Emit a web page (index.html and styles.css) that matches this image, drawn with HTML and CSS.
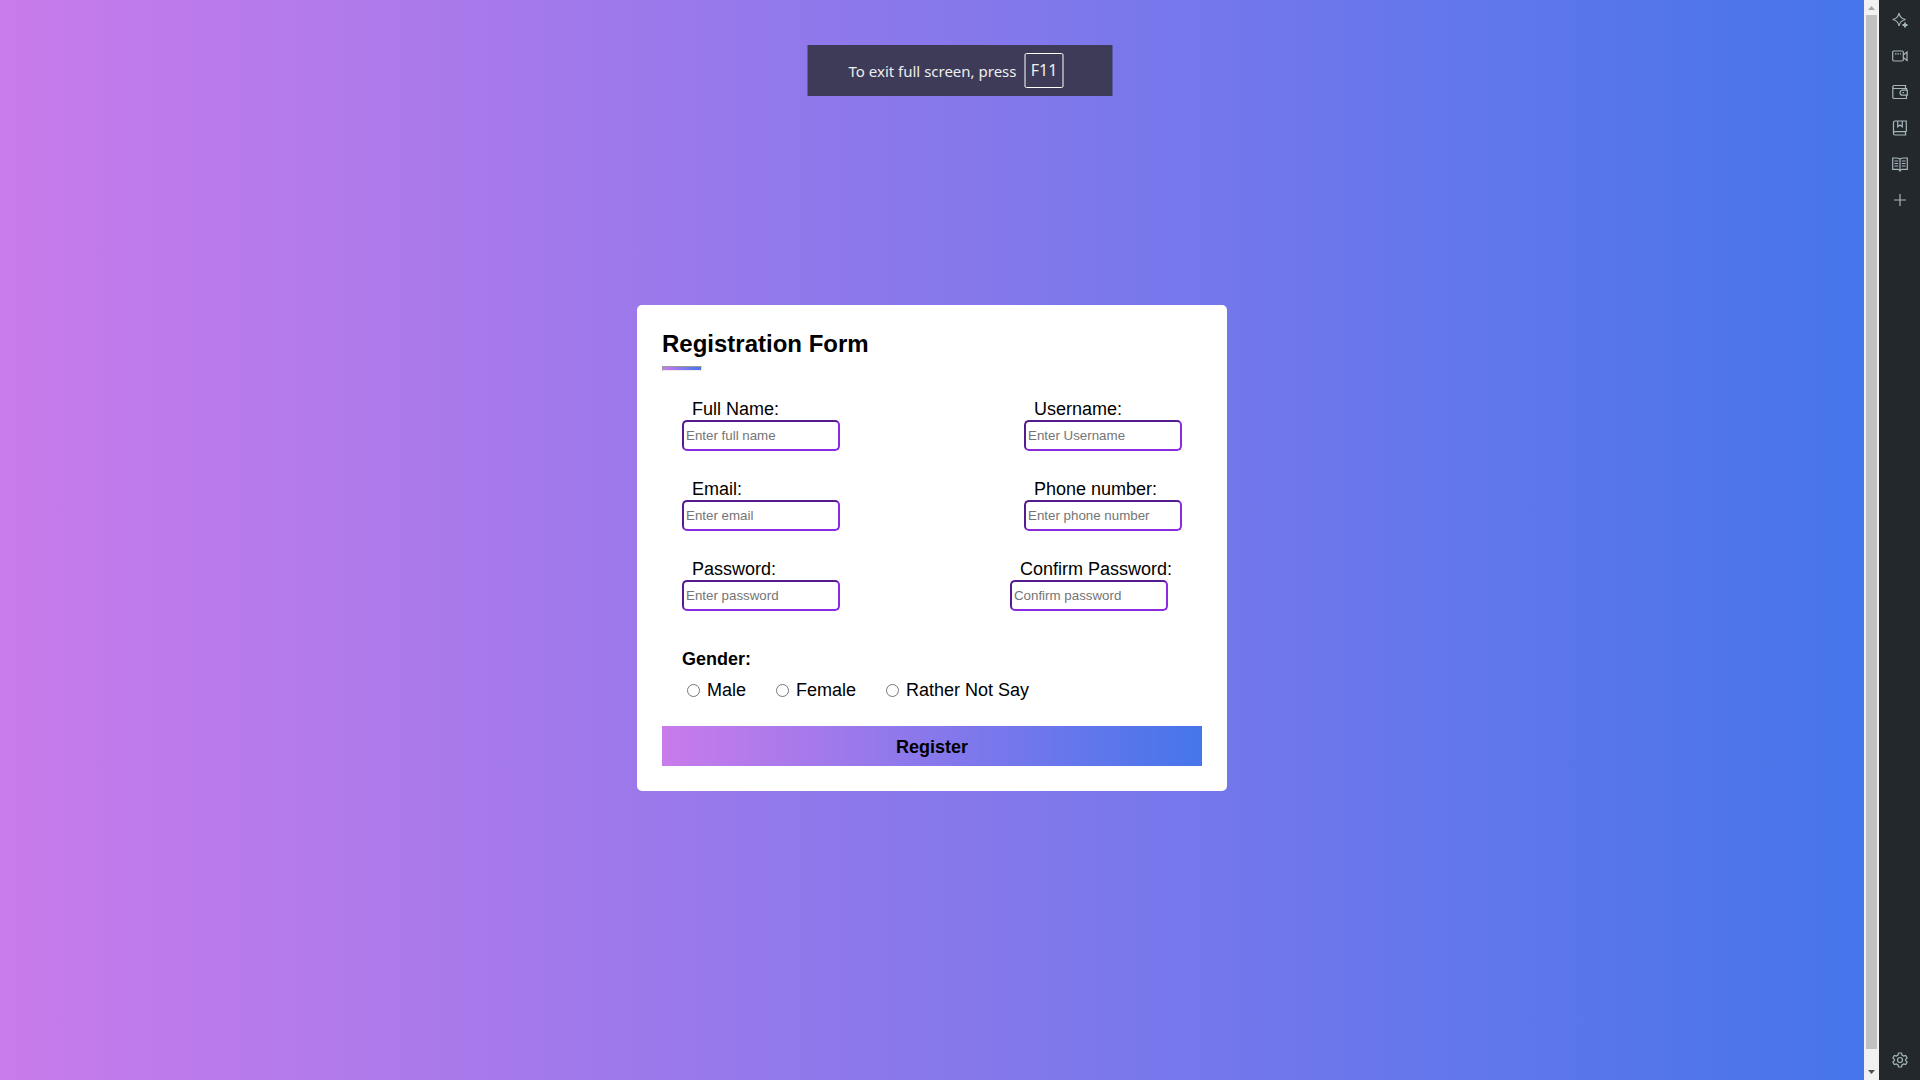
FILE: index.html
```html
<!DOCTYPE html>
<html lang="en">
<head>
<meta charset="utf-8">
<title>Registration Form</title>
<link rel="stylesheet" href="styles.css">
</head>
<body>
<div class="screen">
  <main class="page">
    <form class="card">
      <h1 class="title">Registration Form</h1>
      <hr class="rule">
      <div class="fields">
        <div class="row">
          <div class="field"><label for="fullname">Full Name:</label><input type="text" id="fullname" placeholder="Enter full name"></div>
          <div class="field"><label for="username">Username:</label><input type="text" id="username" placeholder="Enter Username"></div>
        </div>
        <div class="row">
          <div class="field"><label for="email">Email:</label><input type="email" id="email" placeholder="Enter email"></div>
          <div class="field"><label for="phone">Phone number:</label><input type="tel" id="phone" placeholder="Enter phone number"></div>
        </div>
        <div class="row">
          <div class="field"><label for="password">Password:</label><input type="password" id="password" placeholder="Enter password"></div>
          <div class="field"><label for="confirm">Confirm Password:</label><input type="password" id="confirm" placeholder="Confirm password"></div>
        </div>
      </div>
      <fieldset class="gender">
        <legend>Gender:</legend>
        <div class="choices">
          <label><input type="radio" name="gender">Male</label>
          <label><input type="radio" name="gender">Female</label>
          <label><input type="radio" name="gender">Rather Not Say</label>
        </div>
      </fieldset>
      <button type="submit" class="register">Register</button>
    </form>
  </main>
  <div class="scrollbar" aria-hidden="true">
    <svg width="15" height="15" viewBox="0 0 15 15"><path d="M4 10h7L7.500 6z" fill="#a3a3a3"/></svg>
    <div class="track"><div class="thumb"></div></div>
    <svg width="15" height="15" viewBox="0 0 15 15"><path d="M4 5h7L7.500 9z" fill="#505050"/></svg>
  </div>
  <nav class="sidebar" aria-label="Browser sidebar">
    <button type="button" class="tool" aria-label="Assistant"><svg viewBox="0 0 16 16"><path d="M7 1Q7.800 6.200 13.500 7.500Q7.800 8.800 7 14Q6.200 8.800 .7 7.500Q6.200 6.200 7 1z"/><path d="M13 10.500v5M10.500 13h5" stroke-width="1.800"/></svg></button>
    <button type="button" class="tool" aria-label="Video call"><svg viewBox="0 0 16 16"><rect x=".7" y="3" width="10.600" height="10" rx="1.200"/><path d="M11.300 7l3.700-3v8.500l-3.700-3M3 5.800h1.500M5.500 5.800H7M8 5.800h1"/></svg></button>
    <button type="button" class="tool" aria-label="Wallet"><svg viewBox="0 0 16 16"><path d="M.8 2.800Q.8 1.500 2 1.500h11.500v3H2Q.8 4.500.8 2.800v10.400q0 1.300 1.300 1.300h12.400v-3M14.500 6.200V4.500h-1M15.300 6.200h-4.800a2.500 2.500 0 0 0 0 5h4.800zM10.500 8.700h1.500"/></svg></button>
    <button type="button" class="tool" aria-label="Bookmarks"><svg viewBox="0 0 16 16"><path d="M14.300 11.700V1H3A1.500 1.500 0 0 0 1.500 2.500v11A1.500 1.500 0 0 0 3 15h11.300M14.300 11.700H3a1.600 1.600 0 0 0-1.500 1.600M5.700 1v5.800L8 5l2.300 1.800V1M13.500 12v3"/></svg></button>
    <button type="button" class="tool" aria-label="Reading list"><svg viewBox="0 0 16 16"><path d="M8 3Q6.500 2 4 2H.7v11.300H5.500Q7.500 13.300 8 14.800Q8.500 13.300 10.500 13.300h4.800V2H12Q9.500 2 8 3zv11.500M2.500 5h3.700M2.500 7.500h3.700M2.500 10h3.700M9.800 5h3.700M9.800 7.500h3.700M9.800 10h3.700"/></svg></button>
    <button type="button" class="tool" aria-label="Add to sidebar"><svg viewBox="0 0 16 16"><path d="M8 2v12M2 8h12"/></svg></button>
    <button type="button" class="tool settings" aria-label="Sidebar settings"><svg viewBox="0 0 16 16"><path d="M6.500 1h3l.5 2 1.600 1 2-.6 1.500 2.600-1.500 1.400v1.200l1.500 1.400-1.500 2.600-2-.6-1.600 1-.5 2h-3L6 13l-1.600-1-2 .6L.9 10l1.500-1.400V7.400L.9 6l1.500-2.600 2 .6L6 3z"/><circle cx="8" cy="8" r="2.500"/></svg></button>
  </nav>
  <div class="toast" role="status"><span>To exit full screen, press</span><kbd>F11</kbd></div>
</div>
</body>
</html>
```
FILE: styles.css
```css
* { box-sizing: border-box; }

body {
  margin: 0;
  font-family: "Liberation Sans", Arial, sans-serif;
  font-size: 18px;
  color: #000;
}

.screen {
  position: relative;
  display: flex;
  height: 100vh;
  overflow: hidden;
}

.page {
  flex: 1;
  display: flex;
  align-items: center;
  justify-content: center;
  padding-top: 16px;
  background: linear-gradient(90deg, #c97beb 0%, #4675eb 100%);
}

.card {
  width: 590px;
  padding: 25px;
  border-radius: 5px;
  background: #fff;
}

.title {
  margin: 0;
  font-size: 24px;
  line-height: 28px;
}

.rule {
  width: 40px;
  height: 5px;
  margin: 8px 0 0;
  border: 1px solid;
  border-color: #9a9a9a #eee #eee #9a9a9a;
  background: linear-gradient(90deg, #c97beb, #4675eb);
}

.fields {
  display: grid;
  gap: 28px;
  padding: 28px 20px 0;
}

.row {
  display: flex;
  justify-content: space-between;
}

.field {
  display: flex;
  flex-direction: column;
  align-items: flex-start;
}

.field label {
  margin: 0 10px;
  line-height: 21px;
}

.field input {
  width: 158px;
  height: 31px;
  padding: 1px 2px;
  border: 2px inset blueviolet;
  border-radius: 5px;
}

.gender {
  margin: 0;
  padding: 36px 20px 0;
  border: 0;
}

.gender legend {
  float: left;
  width: 100%;
  padding: 0;
  font-weight: bold;
  line-height: 24px;
}

.choices {
  clear: both;
  display: flex;
  gap: 25px;
  padding-top: 8px;
}

.choices label {
  display: flex;
  align-items: center;
  gap: 7px;
  line-height: 22px;
}

.choices input {
  width: 13px;
  height: 13px;
  margin: 0 0 0 5px;
}

.register {
  width: 100%;
  height: 40px;
  margin-top: 25px;
  padding: 2px 0 0;
  border: 0;
  background: linear-gradient(90deg, #c97beb, #4675eb);
  color: #000;
  font: bold 18px "Liberation Sans", Arial, sans-serif;
}

.scrollbar {
  display: flex;
  flex-direction: column;
  width: 15px;
  background: #f1f1f1;
}

.scrollbar svg { display: block; }

.track {
  flex: 1;
  padding: 0 2px;
}

.thumb {
  height: 98.5%;
  background: #c1c1c1;
}

.sidebar {
  display: flex;
  flex-direction: column;
  align-items: center;
  gap: 20px;
  width: 41px;
  padding: 12px 0;
  background: #23282c;
}

.tool {
  width: 16px;
  height: 16px;
  padding: 0;
  border: 0;
  background: none;
}

.tool svg {
  display: block;
  width: 16px;
  height: 16px;
  fill: none;
  stroke: #a6b6bd;
  stroke-width: 1.2;
}

.settings { margin-top: auto; }

.toast {
  position: absolute;
  top: 45px;
  left: 50%;
  display: flex;
  align-items: center;
  justify-content: center;
  gap: 8px;
  width: 305px;
  height: 51px;
  padding-right: 8px;
  transform: translateX(-50%);
  background: #3d3b58;
  color: #eee;
  font: 15px "Noto Sans", sans-serif;
}

.toast kbd {
  width: 39px;
  border: 1px solid #fff;
  border-radius: 2px;
  font: inherit;
  font-size: 16px;
  line-height: 33px;
  text-align: center;
}
```
